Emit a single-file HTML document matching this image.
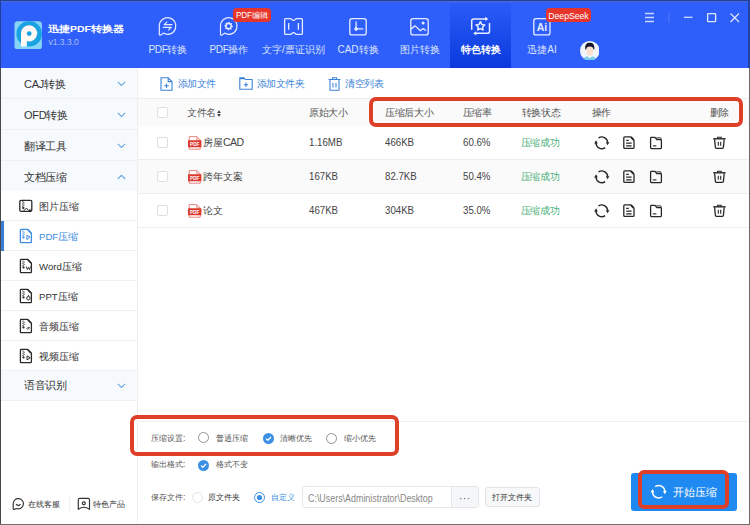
<!DOCTYPE html>
<html><head><meta charset="utf-8">
<style>
*{box-sizing:border-box;margin:0;padding:0}
html,body{width:750px;height:525px;overflow:hidden;background:#fff;font-family:"Liberation Sans",sans-serif;color:#333}
.a{position:absolute;white-space:nowrap}
.badge{position:absolute;background:#E6352C;color:#fff;font-size:9px;line-height:14px;height:14px;border-radius:4px;text-align:center}
.g{position:absolute;left:1px;width:136px;height:31px;background:#F7FAFD;border-bottom:1px solid #ECEFF4}
.g .t{position:absolute;left:23px;top:9px;letter-spacing:-0.3px;font-size:11px;line-height:15px;color:#333}
.g svg{position:absolute;left:116px;top:13px}
.s{position:absolute;left:1px;width:136px;height:30px;background:#fff;border-bottom:1px solid #F0F1F4}
.s .t{position:absolute;left:38px;top:8.5px;font-size:9.6px;line-height:14px;color:#333}
.s svg{position:absolute;left:18px;top:8.5px}
.th{position:absolute;white-space:nowrap;letter-spacing:-0.3px;font-size:9.6px;color:#555;line-height:13px}
.td{position:absolute;white-space:nowrap;font-size:9.6px;color:#444;line-height:13px}
.lab{position:absolute;white-space:nowrap;font-size:8.25px;line-height:13px;color:#555}
.num{font-size:11px;transform:scaleX(0.88);transform-origin:0 50%}
.lt{font-size:10.5px;letter-spacing:-0.5px}
.red{position:absolute;border:4px solid #DD3F29;border-radius:7px}
</style></head><body>
<div class="a" style="left:0;top:0;width:750px;height:68px;background:#2F5FFA"></div>
<div class="a" style="left:450px;top:1px;width:61px;height:67px;background:linear-gradient(#2C5CF8,#0A3ADC)"></div>
<svg class="a" style="left:14px;top:20.5px" width="28.5" height="28.5" viewBox="14 20.5 28.5 28.5">
<defs><clipPath id="lc"><rect x="14.5" y="20.8" width="27.4" height="28.1" rx="3.2"/></clipPath></defs>
<g clip-path="url(#lc)">
<rect x="14" y="20.5" width="28.5" height="28.5" fill="#86D5F5"/>
<circle cx="29.2" cy="33.2" r="12.8" fill="#19A3E3"/>
<path d="M21 45 V32.8 A8.1 8.1 0 1 1 26.9 40.6 V45 Q26.9 46 25.9 46 H22 Q21 46 21 45 Z" fill="#FFF8F5"/>
<circle cx="29.2" cy="33.1" r="2.4" fill="#19A3E3"/>
</g></svg>
<div class="a" style="left:48px;top:20.7px;font-size:11px;line-height:16px;font-weight:bold;color:#fff;transform:scaleY(0.8)">迅捷<span style="font-size:10.5px">PDF</span>转换器</div>
<div class="a" style="left:48.5px;top:35.5px;font-size:8.5px;line-height:13px;color:#A8BEF8">v1.3.3.0</div>
<div class="a" style="left:128px;top:42.5px;width:80px;text-align:center;font-size:10px;line-height:14px;color:#DCE5FE;"><span style="letter-spacing:-0.4px">PDF</span>转换</div>
<div class="a" style="left:189px;top:42.5px;width:80px;text-align:center;font-size:10px;line-height:14px;color:#DCE5FE;"><span style="letter-spacing:-0.4px">PDF</span>操作</div>
<div class="a" style="left:253.5px;top:42.5px;width:80px;text-align:center;font-size:10px;line-height:14px;color:#DCE5FE;">文字/票证识别</div>
<div class="a" style="left:318px;top:42.5px;width:80px;text-align:center;font-size:10px;line-height:14px;color:#DCE5FE;">CAD转换</div>
<div class="a" style="left:379.5px;top:42.5px;width:80px;text-align:center;font-size:10px;line-height:14px;color:#DCE5FE;">图片转换</div>
<div class="a" style="left:441px;top:42.5px;width:80px;text-align:center;font-size:10px;line-height:14px;font-weight:bold;color:#fff;">特色转换</div>
<div class="a" style="left:502px;top:42.5px;width:80px;text-align:center;font-size:10px;line-height:14px;color:#DCE5FE;">迅捷AI</div>
<svg class="a" style="left:140px;top:10px" width="420" height="30" viewBox="140 10 420 30"><path d="M159.29999999999998 25.9 A8.3 8.3 0 1 1 163.29999999999998 33.1 Q161.4 34.8 160.29999999999998 35.2 Q159.29999999999998 35.4 159.29999999999998 34.3 Z" stroke="#E6ECFF" fill="none" stroke-width="1.2" stroke-linejoin="round"/><path d="M172 24.6 H164.2 L166.8 22.1 M163.4 27.4 H171.2 L168.6 29.9" stroke="#E6ECFF" fill="none" stroke-width="1.2" stroke-linecap="round" stroke-linejoin="round"/><path d="M220.5 25.9 A8.3 8.3 0 1 1 224.5 33.1 Q222.60000000000002 34.8 221.5 35.2 Q220.5 35.4 220.5 34.3 Z" stroke="#E6ECFF" fill="none" stroke-width="1.2" stroke-linejoin="round"/><path d="M232.90 26.10 L232.82 26.94 L231.65 27.36 L231.34 27.93 L231.64 29.14 L230.99 29.68 L229.86 29.15 L229.24 29.34 L228.60 30.40 L227.76 30.32 L227.34 29.15 L226.77 28.84 L225.56 29.14 L225.02 28.49 L225.55 27.36 L225.36 26.74 L224.30 26.10 L224.38 25.26 L225.55 24.84 L225.86 24.27 L225.56 23.06 L226.21 22.52 L227.34 23.05 L227.96 22.86 L228.60 21.80 L229.44 21.88 L229.86 23.05 L230.43 23.36 L231.64 23.06 L232.18 23.71 L231.65 24.84 L231.84 25.46Z" fill="#E6ECFF"/><circle cx="228.6" cy="26.1" r="1.9" fill="#2F5FFA"/><path d="M284.6 19.6 Q284.6 18.6 285.6 18.6 H290.3 Q291.2 18.6 291.7 19.4 Q293.5 21.4 295.3 19.4 Q295.8 18.6 296.7 18.6 H301.4 Q302.4 18.6 302.4 19.6 V33.4 Q302.4 34.4 301.4 34.4 H296.7 Q295.8 34.4 295.3 33.6 Q293.5 31.6 291.7 33.6 Q291.2 34.4 290.3 34.4 H285.6 Q284.6 34.4 284.6 33.4 Z" stroke="#E6ECFF" fill="none" stroke-width="1.3" stroke-linejoin="round"/><path d="M288.7 23 V29.8 M298.4 23 V29.8" stroke="#E6ECFF" fill="none" stroke-width="1.3"/><rect x="349.8" y="18.6" width="16.4" height="16.3" rx="2.2" stroke="#E6ECFF" fill="none" stroke-width="1.3"/><path d="M356.1 21.4 V28.9 H363.3" stroke="#E6ECFF" fill="none" stroke-width="1.3"/><path d="M356.1 26.6 L358.3 28.9 L356.1 31.2 L353.9 28.9Z" fill="#E6ECFF"/><rect x="410.8" y="18.6" width="17.4" height="16.3" rx="2.2" stroke="#E6ECFF" fill="none" stroke-width="1.3"/><path d="M411 28.9 L415.2 25.9 L420.4 30.8 L423.1 28.6 L425.6 30.3" stroke="#E6ECFF" fill="none" stroke-width="1.3" stroke-linejoin="round" stroke-linecap="round"/><circle cx="423.1" cy="22.9" r="1.5" fill="#E6ECFF"/><path d="M471.7 29.8 V21 Q471.7 18.9 473.8 18.9 H486.2" stroke="#E6ECFF" fill="none" stroke-width="1.5"/><path d="M485.2 16.8 L488.4 18.9 L485.2 21 Z" fill="#E6ECFF"/><path d="M489.5 23.1 V31.2 Q489.5 33.3 487.4 33.3 H475.2" stroke="#E6ECFF" fill="none" stroke-width="1.5"/><path d="M476.3 31.2 L473.1 33.3 L476.3 35.4 Z" fill="#E6ECFF"/><path d="M480.40 21.70 L481.75 24.44 L484.77 24.88 L482.59 27.01 L483.10 30.02 L480.40 28.60 L477.70 30.02 L478.21 27.01 L476.03 24.88 L479.05 24.44Z" stroke="#E6ECFF" fill="none" stroke-width="1.5" stroke-linejoin="round"/><rect x="533.8" y="18.6" width="16.2" height="16.3" rx="2.2" stroke="#E6ECFF" fill="none" stroke-width="1.3"/><text x="542" y="30.6" font-family="Liberation Sans" font-weight="bold" font-size="10.5" fill="#E6ECFF" text-anchor="middle">Ai</text></svg>
<div class="badge" style="left:232.5px;top:8.2px;width:38.5px;font-size:8.2px;letter-spacing:-0.2px;padding-top:0.6px">PDF编辑</div>
<div class="badge" style="left:545.7px;top:8px;width:45.5px;font-size:8.8px;letter-spacing:-0.1px;padding-top:0.6px">DeepSeek</div>
<svg class="a" style="left:579.7px;top:40.8px" width="19.6" height="19.6" viewBox="0 0 20 20">
<circle cx="10" cy="10" r="10" fill="#F1F5FB"/>
<clipPath id="cp"><circle cx="10" cy="10" r="10"/></clipPath>
<g clip-path="url(#cp)">
<path d="M2.5 21 C3 16.5 6 15.6 10 15.6 C14 15.6 17 16.5 17.5 21Z" fill="#78CBEA"/>
<path d="M7.5 15.4 L10 17.6 L12.5 15.4Z" fill="#fff"/>
<ellipse cx="10" cy="10.2" rx="3.5" ry="4.9" fill="#FBE0D0"/>
<path d="M5.4 8.8 C4.8 3.5 7 1.8 10 1.8 C13 1.8 15.2 3.5 14.6 8.8 L13.7 8.8 C13.6 6.6 12.5 5.6 10 5.6 C7.5 5.6 6.4 6.6 6.3 8.8 Z" fill="#15192A"/>
</g></svg>
<svg class="a" style="left:644px;top:12px" width="100" height="12" viewBox="0 0 100 12">
<path d="M1 1.5 H10 M1 5.5 H10 M1 9.5 H10" stroke="#C9D6FC" stroke-width="1.4"/>
<path d="M25 1 V10.5" stroke="#5B84F5" stroke-width="0.8"/>
<path d="M40 5.3 H48.5" stroke="#DCE5FE" stroke-width="1.2"/>
<rect x="63.6" y="1.6" width="8" height="8" rx="0.6" fill="none" stroke="#DCE5FE" stroke-width="1.35"/>
<path d="M86.5 1.5 L95 10 M95 1.5 L86.5 10" stroke="#DCE5FE" stroke-width="1.2"/>
</svg>
<div class="a" style="left:0;top:68px;width:138px;height:457px;background:#fff;border-right:1px solid #EEEFF2"></div>
<div class="g" style="top:68px"><div class="t">CAJ转换</div><svg width="9" height="6" viewBox="0 0 9 6"><path d="M0.8 0.8 L4.5 4.5 L8.2 0.8" fill="none" stroke="#68A6DE" stroke-width="1.1"/></svg></div>
<div class="g" style="top:99px"><div class="t">OFD转换</div><svg width="9" height="6" viewBox="0 0 9 6"><path d="M0.8 0.8 L4.5 4.5 L8.2 0.8" fill="none" stroke="#68A6DE" stroke-width="1.1"/></svg></div>
<div class="g" style="top:130px"><div class="t">翻译工具</div><svg width="9" height="6" viewBox="0 0 9 6"><path d="M0.8 0.8 L4.5 4.5 L8.2 0.8" fill="none" stroke="#68A6DE" stroke-width="1.1"/></svg></div>
<div class="g" style="top:161px"><div class="t">文档压缩</div><svg width="9" height="6" viewBox="0 0 9 6"><path d="M0.8 5 L4.5 1.3 L8.2 5" fill="none" stroke="#68A6DE" stroke-width="1.1"/></svg></div>
<div class="s" style="top:191px"><div class="t" style="color:#333">图片压缩</div></div>
<div class="s" style="top:221px"><div class="t" style="color:#3D8BE0">PDF压缩</div></div>
<div class="s" style="top:251px"><div class="t" style="color:#333">Word压缩</div></div>
<div class="s" style="top:281px"><div class="t" style="color:#333">PPT压缩</div></div>
<div class="s" style="top:311px"><div class="t" style="color:#333">音频压缩</div></div>
<div class="s" style="top:341px"><div class="t" style="color:#333">视频压缩</div></div>
<svg class="a" style="left:15px;top:195px" width="20" height="170" viewBox="15 195 20 170"><rect x="19.8" y="200.3" width="12" height="11" rx="1.3" fill="none" stroke="#2A2A2A" stroke-width="1.3"/><rect x="22.2" y="201.2" width="1.1" height="1.1" fill="#2A2A2A"/><rect x="23.3" y="202.29999999999998" width="1.1" height="1.1" fill="#2A2A2A"/><rect x="22.2" y="203.39999999999998" width="1.1" height="1.1" fill="#2A2A2A"/><rect x="23.3" y="204.5" width="1.1" height="1.1" fill="#2A2A2A"/><rect x="22.2" y="205.6" width="1.1" height="1.1" fill="#2A2A2A"/><circle cx="23.3" cy="208.0" r="1.15" fill="#2A2A2A"/><path d="M23.6 211 L26.4 208.1 L28.6 210.6" fill="none" stroke="#2A2A2A" stroke-width="1"/><rect x="29" y="209.5" width="2.2" height="1.4" fill="#2A2A2A"/><path d="M21.2 229.4 H27.6 L31.4 233.20000000000002 V241.9 Q31.4 242.70000000000002 30.6 242.70000000000002 H21.2 Q20.4 242.70000000000002 20.4 241.9 V230.20000000000002 Q20.4 229.4 21.2 229.4 Z" fill="none" stroke="#3D8BE0" stroke-width="1.3" stroke-linejoin="round"/><path d="M27.8 229.8 L31 233.0" stroke="#3D8BE0" stroke-width="1.6"/><rect x="22.4" y="230.6" width="1.1" height="1.1" fill="#3D8BE0"/><rect x="23.5" y="231.7" width="1.1" height="1.1" fill="#3D8BE0"/><rect x="22.4" y="232.79999999999998" width="1.1" height="1.1" fill="#3D8BE0"/><rect x="23.5" y="233.9" width="1.1" height="1.1" fill="#3D8BE0"/><rect x="22.4" y="235.0" width="1.1" height="1.1" fill="#3D8BE0"/><circle cx="23.5" cy="237.4" r="1.15" fill="#3D8BE0"/><path d="M26.9 235.3 L30 236.9 L26.9 239.6 Z" fill="none" stroke="#3D8BE0" stroke-width="1"/><path d="M21.2 259.4 H27.6 L31.4 263.2 V271.9 Q31.4 272.7 30.6 272.7 H21.2 Q20.4 272.7 20.4 271.9 V260.2 Q20.4 259.4 21.2 259.4 Z" fill="none" stroke="#2A2A2A" stroke-width="1.3" stroke-linejoin="round"/><path d="M27.8 259.79999999999995 L31 263.0" stroke="#2A2A2A" stroke-width="1.6"/><rect x="22.4" y="260.6" width="1.1" height="1.1" fill="#2A2A2A"/><rect x="23.5" y="261.70000000000005" width="1.1" height="1.1" fill="#2A2A2A"/><rect x="22.4" y="262.8" width="1.1" height="1.1" fill="#2A2A2A"/><rect x="23.5" y="263.90000000000003" width="1.1" height="1.1" fill="#2A2A2A"/><rect x="22.4" y="265.0" width="1.1" height="1.1" fill="#2A2A2A"/><circle cx="23.5" cy="267.40000000000003" r="1.15" fill="#2A2A2A"/><path d="M26.3 266.5 L27.3 269.6 L28.4 267.3 L29.5 269.6 L30.4 266.5" fill="none" stroke="#2A2A2A" stroke-width="0.9"/><path d="M21.2 289.4 H27.6 L31.4 293.2 V301.9 Q31.4 302.7 30.6 302.7 H21.2 Q20.4 302.7 20.4 301.9 V290.2 Q20.4 289.4 21.2 289.4 Z" fill="none" stroke="#2A2A2A" stroke-width="1.3" stroke-linejoin="round"/><path d="M27.8 289.79999999999995 L31 293.0" stroke="#2A2A2A" stroke-width="1.6"/><rect x="22.4" y="290.6" width="1.1" height="1.1" fill="#2A2A2A"/><rect x="23.5" y="291.70000000000005" width="1.1" height="1.1" fill="#2A2A2A"/><rect x="22.4" y="292.8" width="1.1" height="1.1" fill="#2A2A2A"/><rect x="23.5" y="293.90000000000003" width="1.1" height="1.1" fill="#2A2A2A"/><rect x="22.4" y="295.0" width="1.1" height="1.1" fill="#2A2A2A"/><circle cx="23.5" cy="297.40000000000003" r="1.15" fill="#2A2A2A"/><circle cx="28.4" cy="298.2" r="1.7" fill="none" stroke="#2A2A2A" stroke-width="1"/><path d="M28.4 295 V296.5" stroke="#2A2A2A" stroke-width="1"/><path d="M21.2 319.4 H27.6 L31.4 323.2 V331.9 Q31.4 332.7 30.6 332.7 H21.2 Q20.4 332.7 20.4 331.9 V320.2 Q20.4 319.4 21.2 319.4 Z" fill="none" stroke="#2A2A2A" stroke-width="1.3" stroke-linejoin="round"/><path d="M27.8 319.79999999999995 L31 323.0" stroke="#2A2A2A" stroke-width="1.6"/><rect x="22.4" y="320.6" width="1.1" height="1.1" fill="#2A2A2A"/><rect x="23.5" y="321.70000000000005" width="1.1" height="1.1" fill="#2A2A2A"/><rect x="22.4" y="322.8" width="1.1" height="1.1" fill="#2A2A2A"/><rect x="23.5" y="323.90000000000003" width="1.1" height="1.1" fill="#2A2A2A"/><rect x="22.4" y="325.0" width="1.1" height="1.1" fill="#2A2A2A"/><circle cx="23.5" cy="327.40000000000003" r="1.15" fill="#2A2A2A"/><path d="M26.6 328.8 Q28 326.3 29.8 327.6 M27.2 329.5 Q28.2 328.2 29.4 328.8" fill="none" stroke="#2A2A2A" stroke-width="0.9"/><path d="M21.2 349.4 H27.6 L31.4 353.2 V361.9 Q31.4 362.7 30.6 362.7 H21.2 Q20.4 362.7 20.4 361.9 V350.2 Q20.4 349.4 21.2 349.4 Z" fill="none" stroke="#2A2A2A" stroke-width="1.3" stroke-linejoin="round"/><path d="M27.8 349.79999999999995 L31 353.0" stroke="#2A2A2A" stroke-width="1.6"/><rect x="22.4" y="350.6" width="1.1" height="1.1" fill="#2A2A2A"/><rect x="23.5" y="351.70000000000005" width="1.1" height="1.1" fill="#2A2A2A"/><rect x="22.4" y="352.8" width="1.1" height="1.1" fill="#2A2A2A"/><rect x="23.5" y="353.90000000000003" width="1.1" height="1.1" fill="#2A2A2A"/><rect x="22.4" y="355.0" width="1.1" height="1.1" fill="#2A2A2A"/><circle cx="23.5" cy="357.40000000000003" r="1.15" fill="#2A2A2A"/><path d="M27 355.8 L30.2 357.8 L27 359.8 Z" fill="none" stroke="#2A2A2A" stroke-width="1"/></svg>
<div class="a" style="left:1px;top:221px;width:3px;height:30px;background:#3B7CD6"></div>
<div class="g" style="top:371px;height:30px"><div class="t" style="top:7px">语音识别</div><svg style="top:11.5px" width="9" height="6" viewBox="0 0 9 6"><path d="M0.8 0.8 L4.5 4.5 L8.2 0.8" fill="none" stroke="#68A6DE" stroke-width="1.1"/></svg></div>
<svg class="a" style="left:8px;top:494px" width="90" height="20" viewBox="8 494 90 20">
<path d="M13.2 503.7 A5.1 5.1 0 1 1 16.6 508.5 L14.3 509.4 Q13.2 509.7 13.2 508.6 Z" fill="none" stroke="#333" stroke-width="1.15" stroke-linejoin="round"/>
<path d="M16.1 504.2 Q18.3 506.9 20.5 504.2" fill="none" stroke="#333" stroke-width="1.2"/>
<path d="M79.7 498.3 H88.2 Q89.5 498.3 89.5 499.6 V509.4 Q86.6 507.2 83.85 507.2 Q81.1 507.2 78.3 509.4 V499.6 Q78.3 498.3 79.7 498.3 Z" fill="none" stroke="#333" stroke-width="1.15" stroke-linejoin="round"/>
<circle cx="83.8" cy="503.3" r="1.5" fill="none" stroke="#333" stroke-width="1.2"/>
</svg>
<div class="a" style="left:28px;top:497px;font-size:8.4px;line-height:14px;color:#333">在线客服</div>
<div class="a" style="left:69px;top:497px;width:1px;height:14px;background:#EDEFF2"></div>
<div class="a" style="left:93px;top:497px;font-size:8.4px;line-height:14px;color:#333">特色产品</div>
<svg class="a" style="left:160px;top:77px" width="13" height="14" viewBox="0 0 13 14"><path d="M1 0.8 H8.2 L12 4.6 V13.2 H1 Z" fill="none" stroke="#3C82D8" stroke-width="1.1" stroke-linejoin="round"/><path d="M8.2 0.8 V4.6 H12" fill="none" stroke="#3C82D8" stroke-width="1.1"/><path d="M6.5 6.5 V11 M4.2 8.8 H8.8" stroke="#3C82D8" stroke-width="1.1"/></svg>
<div class="a" style="left:177.5px;top:77px;font-size:9.8px;letter-spacing:-0.4px;line-height:14px;color:#3C82D8">添加文件</div>
<svg class="a" style="left:238.5px;top:77px" width="14" height="13" viewBox="0 0 14 13"><path d="M0.8 12.2 V0.8 H5 L6.5 2.5 H13.2 V12.2 Z" fill="none" stroke="#3C82D8" stroke-width="1.1" stroke-linejoin="round"/><path d="M0.8 0.8 H5 L6.2 2.2 H0.8Z" fill="#3C82D8"/><path d="M7 5.5 V10 M4.8 7.8 H9.2" stroke="#3C82D8" stroke-width="1.1"/></svg>
<div class="a" style="left:256.5px;top:77px;font-size:9.8px;letter-spacing:-0.4px;line-height:14px;color:#3C82D8">添加文件夹</div>
<svg class="a" style="left:328px;top:77px" width="13" height="14" viewBox="0 0 13 14"><path d="M0.5 2.5 H12.5 M4.5 2.5 V0.8 H8.5 V2.5" fill="none" stroke="#3C82D8" stroke-width="1.1"/><path d="M2 3 V13.2 H11 V3" fill="none" stroke="#3C82D8" stroke-width="1.1"/><path d="M5 6 V10.5 M8 6 V10.5" stroke="#3C82D8" stroke-width="1.1"/></svg>
<div class="a" style="left:345px;top:77px;font-size:9.8px;letter-spacing:-0.4px;line-height:14px;color:#3C82D8">清空列表</div>
<div class="a" style="left:138px;top:97.5px;width:611px;height:29.5px;background:#FAFAFB;border-top:1px solid #EEEEF0;border-bottom:1px solid #EEEEF0"></div>
<div class="a" style="left:157px;top:107px;width:11px;height:11px;border:1px solid #DCDFE4;border-radius:2px;background:#fff"></div>
<div class="th" style="left:187px;top:106px">文件名</div>
<div class="th" style="left:309px;top:106px">原始大小</div>
<div class="th" style="left:385px;top:106px">压缩后大小</div>
<div class="th" style="left:462.5px;top:106px">压缩率</div>
<div class="th" style="left:521.5px;top:106px">转换状态</div>
<div class="th" style="left:591.5px;top:106px">操作</div>
<div class="th" style="left:709.5px;top:106px">删除</div>
<svg class="a" style="left:216.5px;top:110px" width="4" height="7" viewBox="0 0 4 7"><path d="M0.2 2.9 L2 0.3 L3.8 2.9Z M0.2 4.1 L2 6.7 L3.8 4.1Z" fill="#333"/></svg>
<div class="a" style="left:138px;top:126px;width:611px;height:34px;background:#fff;border-bottom:1px solid #EEEEF0"></div>
<div class="a" style="left:157px;top:137.3px;width:11px;height:11px;border:1px solid #DCDFE4;border-radius:2px;background:#fff"></div>
<div class="td" style="left:203px;top:136.3px">房屋<span class="lt">CAD</span></div>
<div class="td num" style="left:309px;top:135.8px">1.16MB</div>
<div class="td num" style="left:385px;top:135.8px">466KB</div>
<div class="td num" style="left:462.5px;top:135.8px">60.6%</div>
<div class="td" style="left:520.5px;top:136.3px;color:#4CB27B;font-size:9.6px;letter-spacing:-0.3px">压缩成功</div>
<div class="a" style="left:138px;top:160px;width:611px;height:34px;background:#FAFAFA;border-bottom:1px solid #EEEEF0"></div>
<div class="a" style="left:157px;top:171.3px;width:11px;height:11px;border:1px solid #DCDFE4;border-radius:2px;background:#fff"></div>
<div class="td" style="left:203px;top:170.3px">跨年文案</div>
<div class="td num" style="left:309px;top:169.8px">167KB</div>
<div class="td num" style="left:385px;top:169.8px">82.7KB</div>
<div class="td num" style="left:462.5px;top:169.8px">50.4%</div>
<div class="td" style="left:520.5px;top:170.3px;color:#4CB27B;font-size:9.6px;letter-spacing:-0.3px">压缩成功</div>
<div class="a" style="left:138px;top:194px;width:611px;height:34px;background:#fff;border-bottom:1px solid #EEEEF0"></div>
<div class="a" style="left:157px;top:205.3px;width:11px;height:11px;border:1px solid #DCDFE4;border-radius:2px;background:#fff"></div>
<div class="td" style="left:203px;top:204.3px">论文</div>
<div class="td num" style="left:309px;top:203.8px">467KB</div>
<div class="td num" style="left:385px;top:203.8px">304KB</div>
<div class="td num" style="left:462.5px;top:203.8px">35.0%</div>
<div class="td" style="left:520.5px;top:204.3px;color:#4CB27B;font-size:9.6px;letter-spacing:-0.3px">压缩成功</div>
<svg class="a" style="left:180px;top:130px" width="560" height="100" viewBox="180 130 560 100"><path d="M189.2 136.6 H196.8 L200.2 140 V149.2 H189.2 Z" fill="#fff" stroke="#E47870" stroke-width="0.9" stroke-linejoin="round"/><path d="M196.8 136.6 V140 H200.2" fill="none" stroke="#E47870" stroke-width="0.8"/><rect x="188" y="140.3" width="13.4" height="7" rx="0.6" fill="#DC3A2F"/><text x="194.7" y="145.6" font-family="Liberation Sans" font-size="4.6" font-weight="bold" fill="#fff" text-anchor="middle">PDF</text><path d="M598.44 138.01 A5.85 5.85 0 0 1 607.65 142.60" fill="none" stroke="#262626" stroke-width="1.4"/><path d="M605.85 142.20000000000002 L609.4499999999999 142.20000000000002 L607.4499999999999 145.32000000000002 Z" fill="#262626"/><path d="M605.16 147.59 A5.85 5.85 0 0 1 595.95 143.00" fill="none" stroke="#262626" stroke-width="1.4"/><path d="M594.15 143.4 L597.7499999999999 143.4 L596.15 140.28 Z" fill="#262626"/><path d="M624.7 136.8 H630.6 L634 140.2 V147.5 Q634 148.4 633.1 148.4 H624.7 Q623.8 148.4 623.8 147.5 V137.7 Q623.8 136.8 624.7 136.8 Z" fill="none" stroke="#262626" stroke-width="1.3" stroke-linejoin="round"/><path d="M631 137.2 L633.6 139.8" stroke="#262626" stroke-width="1.8"/><path d="M626.2 140.4 H628.8 M626.2 143.2 H631.6 M626.2 145.9 H631.6" stroke="#262626" stroke-width="1.2"/><path d="M651.4 137.4 H655 L656.8 139.6 H660.6 Q661.4 139.6 661.4 140.4 V147.8 Q661.4 148.6 660.6 148.6 H651.4 Q650.6 148.6 650.6 147.8 V138.2 Q650.6 137.4 651.4 137.4 Z" fill="none" stroke="#262626" stroke-width="1.3" stroke-linejoin="round"/><path d="M656.2 137.9 H660.4 Q661.2 137.9 661.3 139.4" fill="none" stroke="#262626" stroke-width="1"/><path d="M652.8 145.9 H656.4" stroke="#262626" stroke-width="1.1"/><path d="M713.2 138.8 H725.6" stroke="#262626" stroke-width="1.4"/><path d="M717.6 138.4 V137.3 H721.2 V138.4" fill="none" stroke="#262626" stroke-width="1.1"/><path d="M714.6 139.2 L715.4 147.4 Q715.5 148.3 716.4 148.3 H722.4 Q723.3 148.3 723.4 147.4 L724.2 139.2" fill="none" stroke="#262626" stroke-width="1.3" stroke-linejoin="round"/><path d="M718.3 141.8 V145.8 M720.7 141.8 V145.8" stroke="#262626" stroke-width="1.1"/><path d="M189.2 170.6 H196.8 L200.2 174 V183.2 H189.2 Z" fill="#fff" stroke="#E47870" stroke-width="0.9" stroke-linejoin="round"/><path d="M196.8 170.6 V174 H200.2" fill="none" stroke="#E47870" stroke-width="0.8"/><rect x="188" y="174.3" width="13.4" height="7" rx="0.6" fill="#DC3A2F"/><text x="194.7" y="179.6" font-family="Liberation Sans" font-size="4.6" font-weight="bold" fill="#fff" text-anchor="middle">PDF</text><path d="M598.44 172.01 A5.85 5.85 0 0 1 607.65 176.60" fill="none" stroke="#262626" stroke-width="1.4"/><path d="M605.85 176.20000000000002 L609.4499999999999 176.20000000000002 L607.4499999999999 179.32000000000002 Z" fill="#262626"/><path d="M605.16 181.59 A5.85 5.85 0 0 1 595.95 177.00" fill="none" stroke="#262626" stroke-width="1.4"/><path d="M594.15 177.4 L597.7499999999999 177.4 L596.15 174.28 Z" fill="#262626"/><path d="M624.7 170.8 H630.6 L634 174.2 V181.5 Q634 182.4 633.1 182.4 H624.7 Q623.8 182.4 623.8 181.5 V171.7 Q623.8 170.8 624.7 170.8 Z" fill="none" stroke="#262626" stroke-width="1.3" stroke-linejoin="round"/><path d="M631 171.2 L633.6 173.8" stroke="#262626" stroke-width="1.8"/><path d="M626.2 174.4 H628.8 M626.2 177.2 H631.6 M626.2 179.9 H631.6" stroke="#262626" stroke-width="1.2"/><path d="M651.4 171.4 H655 L656.8 173.6 H660.6 Q661.4 173.6 661.4 174.4 V181.8 Q661.4 182.6 660.6 182.6 H651.4 Q650.6 182.6 650.6 181.8 V172.2 Q650.6 171.4 651.4 171.4 Z" fill="none" stroke="#262626" stroke-width="1.3" stroke-linejoin="round"/><path d="M656.2 171.9 H660.4 Q661.2 171.9 661.3 173.4" fill="none" stroke="#262626" stroke-width="1"/><path d="M652.8 179.9 H656.4" stroke="#262626" stroke-width="1.1"/><path d="M713.2 172.8 H725.6" stroke="#262626" stroke-width="1.4"/><path d="M717.6 172.4 V171.3 H721.2 V172.4" fill="none" stroke="#262626" stroke-width="1.1"/><path d="M714.6 173.2 L715.4 181.4 Q715.5 182.3 716.4 182.3 H722.4 Q723.3 182.3 723.4 181.4 L724.2 173.2" fill="none" stroke="#262626" stroke-width="1.3" stroke-linejoin="round"/><path d="M718.3 175.8 V179.8 M720.7 175.8 V179.8" stroke="#262626" stroke-width="1.1"/><path d="M189.2 204.6 H196.8 L200.2 208 V217.2 H189.2 Z" fill="#fff" stroke="#E47870" stroke-width="0.9" stroke-linejoin="round"/><path d="M196.8 204.6 V208 H200.2" fill="none" stroke="#E47870" stroke-width="0.8"/><rect x="188" y="208.3" width="13.4" height="7" rx="0.6" fill="#DC3A2F"/><text x="194.7" y="213.6" font-family="Liberation Sans" font-size="4.6" font-weight="bold" fill="#fff" text-anchor="middle">PDF</text><path d="M598.44 206.01 A5.85 5.85 0 0 1 607.65 210.60" fill="none" stroke="#262626" stroke-width="1.4"/><path d="M605.85 210.20000000000002 L609.4499999999999 210.20000000000002 L607.4499999999999 213.32000000000002 Z" fill="#262626"/><path d="M605.16 215.59 A5.85 5.85 0 0 1 595.95 211.00" fill="none" stroke="#262626" stroke-width="1.4"/><path d="M594.15 211.4 L597.7499999999999 211.4 L596.15 208.28 Z" fill="#262626"/><path d="M624.7 204.8 H630.6 L634 208.2 V215.5 Q634 216.4 633.1 216.4 H624.7 Q623.8 216.4 623.8 215.5 V205.7 Q623.8 204.8 624.7 204.8 Z" fill="none" stroke="#262626" stroke-width="1.3" stroke-linejoin="round"/><path d="M631 205.2 L633.6 207.8" stroke="#262626" stroke-width="1.8"/><path d="M626.2 208.4 H628.8 M626.2 211.2 H631.6 M626.2 213.9 H631.6" stroke="#262626" stroke-width="1.2"/><path d="M651.4 205.4 H655 L656.8 207.6 H660.6 Q661.4 207.6 661.4 208.4 V215.8 Q661.4 216.6 660.6 216.6 H651.4 Q650.6 216.6 650.6 215.8 V206.2 Q650.6 205.4 651.4 205.4 Z" fill="none" stroke="#262626" stroke-width="1.3" stroke-linejoin="round"/><path d="M656.2 205.9 H660.4 Q661.2 205.9 661.3 207.4" fill="none" stroke="#262626" stroke-width="1"/><path d="M652.8 213.9 H656.4" stroke="#262626" stroke-width="1.1"/><path d="M713.2 206.8 H725.6" stroke="#262626" stroke-width="1.4"/><path d="M717.6 206.4 V205.3 H721.2 V206.4" fill="none" stroke="#262626" stroke-width="1.1"/><path d="M714.6 207.2 L715.4 215.4 Q715.5 216.3 716.4 216.3 H722.4 Q723.3 216.3 723.4 215.4 L724.2 207.2" fill="none" stroke="#262626" stroke-width="1.3" stroke-linejoin="round"/><path d="M718.3 209.8 V213.8 M720.7 209.8 V213.8" stroke="#262626" stroke-width="1.1"/></svg>
<div class="a" style="left:138px;top:421px;width:611px;height:1px;background:#EEF0F3"></div>
<div class="lab" style="left:151px;top:431.5px">压缩设置:</div>
<div class="a" style="left:198px;top:432px;width:11px;height:11px;border:1px solid #8E939A;border-radius:50%;background:#fff"></div>
<div class="lab" style="left:216px;top:431.5px">普通压缩</div>
<svg class="a" style="left:262.5px;top:432.5px" width="11" height="11" viewBox="0 0 11 11"><circle cx="5.5" cy="5.5" r="5.5" fill="#3B8FE4"/><path d="M3 5.6 L4.8 7.3 L8 4" fill="none" stroke="#fff" stroke-width="1.3"/></svg>
<div class="lab" style="left:280px;top:431.5px">清晰优先</div>
<div class="a" style="left:326px;top:432.5px;width:11px;height:11px;border:1px solid #8E939A;border-radius:50%;background:#fff"></div>
<div class="lab" style="left:344px;top:431.5px">缩小优先</div>
<div class="lab" style="left:151px;top:458px">输出格式:</div>
<svg class="a" style="left:198px;top:459.5px" width="11" height="11" viewBox="0 0 11 11"><circle cx="5.5" cy="5.5" r="5.5" fill="#3B8FE4"/><path d="M3 5.6 L4.8 7.3 L8 4" fill="none" stroke="#fff" stroke-width="1.3"/></svg>
<div class="lab" style="left:216px;top:458px">格式不变</div>
<div class="lab" style="left:151px;top:491px">保存文件:</div>
<div class="a" style="left:191.5px;top:492px;width:11px;height:11px;border:1px solid #E3E5E8;border-radius:50%;background:#fff"></div>
<div class="lab" style="left:207.5px;top:491px;color:#333">原文件夹</div>
<svg class="a" style="left:254px;top:492px" width="11" height="11" viewBox="0 0 11 11"><circle cx="5.5" cy="5.5" r="5" fill="#fff" stroke="#3B8FE4" stroke-width="1"/><circle cx="5.5" cy="5.5" r="2.6" fill="#3B8FE4"/></svg>
<div class="lab" style="left:270.5px;top:491px;color:#3B8FE4">自定义</div>
<div class="a" style="left:302px;top:486px;width:176.5px;height:21.5px;border:1px solid #E3E6EA;border-radius:3px;background:#fff"></div>
<div class="a" style="left:451px;top:487px;width:26.5px;height:19.5px;border-left:1px solid #E3E6EA;background:#F5F6F8;border-radius:0 2px 2px 0"></div>
<div class="a" style="left:308px;top:491.5px;font-size:10px;line-height:13px;color:#888;transform:scaleX(0.89);transform-origin:0 50%">C:\Users\Administrator\Desktop</div>
<div class="a" style="left:459px;top:492px;font-size:10px;line-height:13px;color:#555;letter-spacing:0.6px">···</div>
<div class="a" style="left:485px;top:487px;width:54.5px;height:20px;border:1px solid #E1E4E8;border-radius:3px;background:#F7F8FA"></div>
<div class="a" style="left:492px;top:491px;font-size:8.4px;line-height:13px;color:#333">打开文件夹</div>
<div class="a" style="left:630.5px;top:472.5px;width:106px;height:38px;background:#1E89F0;border-radius:3px"></div>

<svg class="a" style="left:640px;top:480px" width="40" height="25" viewBox="640 480 40 25"><path d="M655.14 486.62 A6.2 6.2 0 0 1 664.90 491.48" fill="none" stroke="#fff" stroke-width="1.45"/><path d="M663.0000000000001 491.09999999999997 L666.8000000000001 491.09999999999997 L664.7 494.36 Z" fill="#fff"/><path d="M662.26 496.78 A6.2 6.2 0 0 1 652.50 491.92" fill="none" stroke="#fff" stroke-width="1.45"/><path d="M650.6 492.3 L654.4 492.3 L652.7 489.03999999999996 Z" fill="#fff"/></svg>

<div class="a" style="left:672.5px;top:485px;font-size:11px;line-height:15px;color:#fff">开始压缩</div>
<div class="red" style="left:368.5px;top:97.3px;width:374.2px;height:29.6px"></div>
<div class="red" style="left:130px;top:415px;width:269px;height:40.5px"></div>
<div class="red" style="left:638px;top:469.5px;width:91px;height:39px;border-radius:6px"></div>
<div class="a" style="left:0;top:0;width:750px;height:1px;background:#22409A"></div>
<div class="a" style="left:0;top:1px;width:750px;height:1px;background:#4568D8"></div>
<div class="a" style="left:0;top:2px;width:750px;height:1px;background:#3661EE"></div>
<div class="a" style="left:0;top:0;width:1px;height:68px;background:#1F3F9A"></div>
<div class="a" style="left:0;top:68px;width:1px;height:457px;background:#484848"></div>
<div class="a" style="left:748px;top:0;width:2px;height:68px;background:#2443A2"></div>
<div class="a" style="left:749px;top:68px;width:1px;height:457px;background:#6B6B6B"></div>
<div class="a" style="left:0;top:524px;width:750px;height:1px;background:#6E6E6E"></div>
</body></html>
